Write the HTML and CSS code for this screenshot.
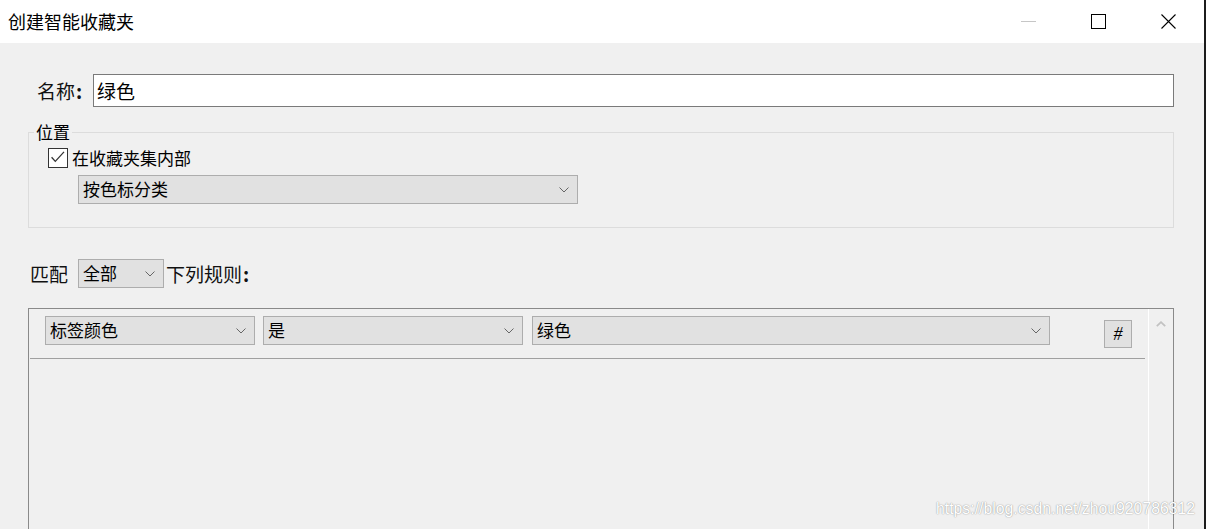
FILE: index.html
```html
<!DOCTYPE html>
<html lang="zh-CN">
<head>
<meta charset="utf-8">
<title>创建智能收藏夹</title>
<link rel="stylesheet" href="styles.css">
</head>
<body>
<div class="window">
  <header class="titlebar">
    <span class="title">创建智能收藏夹</span>
    <div class="controls">
      <span class="ctl"><span class="min-line"></span></span>
      <span class="ctl"><span class="max-box"></span></span>
      <span class="ctl">
        <svg class="close-x" width="15" height="15" viewBox="0 0 15 15"><path d="M0.5 0.5 L14.5 14.5 M14.5 0.5 L0.5 14.5" stroke="#000" stroke-width="1.1" fill="none"/></svg>
      </span>
    </div>
  </header>

  <main class="content">
    <div class="name-row">
      <span class="big-label name-label">名称<b>:</b></span>
      <div class="text-input">绿色</div>
    </div>

    <fieldset class="group">
      <legend>位置</legend>
      <div class="check-row">
        <span class="checkbox">
          <svg width="18" height="18" viewBox="0 0 18 18"><path d="M2.6 8.2 L6.3 12.4 L15 2.9" stroke="#333" stroke-width="1.3" fill="none"/></svg>
        </span>
        <span class="small-text">在收藏夹集内部</span>
      </div>
      <div class="select select-wide">
        <span class="select-text">按色标分类</span>
        <svg class="chev" width="10" height="6" viewBox="0 0 10 6"><path d="M0.5 0.5 L5 5 L9.5 0.5" stroke="#666" stroke-width="1" fill="none"/></svg>
      </div>
    </fieldset>

    <div class="match-row">
      <span class="big-label match-label">匹配</span>
      <div class="select select-small">
        <span class="select-text">全部</span>
        <svg class="chev" width="10" height="6" viewBox="0 0 10 6"><path d="M0.5 0.5 L5 5 L9.5 0.5" stroke="#666" stroke-width="1" fill="none"/></svg>
      </div>
      <span class="big-label rules-label">下列规则<b>:</b></span>
    </div>

    <div class="rules">
      <div class="rules-list">
        <div class="rule-row">
          <div class="select sel-field">
            <span class="select-text">标签颜色</span>
            <svg class="chev" width="10" height="6" viewBox="0 0 10 6"><path d="M0.5 0.5 L5 5 L9.5 0.5" stroke="#666" stroke-width="1" fill="none"/></svg>
          </div>
          <div class="select sel-op">
            <span class="select-text">是</span>
            <svg class="chev" width="10" height="6" viewBox="0 0 10 6"><path d="M0.5 0.5 L5 5 L9.5 0.5" stroke="#666" stroke-width="1" fill="none"/></svg>
          </div>
          <div class="select sel-value">
            <span class="select-text">绿色</span>
            <svg class="chev" width="10" height="6" viewBox="0 0 10 6"><path d="M0.5 0.5 L5 5 L9.5 0.5" stroke="#666" stroke-width="1" fill="none"/></svg>
          </div>
          <span class="hash-btn">#</span>
        </div>
      </div>
      <div class="scrollbar">
        <svg width="10" height="6" viewBox="0 0 10 6"><path d="M0.8 5.2 L5 1.2 L9.2 5.2" stroke="#c2c2c2" stroke-width="1.8" fill="none"/></svg>
      </div>
    </div>
  </main>

  <div class="watermark">https://blog.csdn.net/zhou920786312</div>
</div>
</body>
</html>
```

FILE: styles.css
```css
* { box-sizing: border-box; }

html, body {
  margin: 0;
  padding: 0;
  background: #1c1c1c;
  overflow: hidden;
}

body {
  width: 1206px;
  height: 529px;
  font-family: "Noto Sans CJK SC", "Noto Sans", sans-serif;
  color: #000;
}

.window {
  position: relative;
  width: 1204px;
  height: 529px;
  background: #f0f0f0;
  overflow: hidden;
  display: flex;
  flex-direction: column;
}

/* Title bar */
.titlebar {
  height: 43px;
  flex: 0 0 43px;
  background: #fff;
  display: flex;
  align-items: center;
  justify-content: space-between;
  padding-left: 8px;
}

.title {
  font-size: 18px;
  line-height: 24px;
  margin-top: -1px;
}

.controls {
  display: flex;
  height: 43px;
}

.ctl {
  width: 70px;
  height: 43px;
  display: flex;
  align-items: center;
  justify-content: center;
}

.min-line {
  display: block;
  width: 15px;
  height: 1px;
  background: #c6c6c6;
  margin-right: 1px;
}

.max-box {
  display: block;
  width: 15px;
  height: 15px;
  border: 1px solid #000;
  margin-left: -1px;
}

.close-x { display: block; margin-left: -1px; }

/* Content */
.content {
  flex: 1;
  padding: 0 30px 0 28px;
  display: flex;
  flex-direction: column;
}

.big-label {
  font-size: 19px;
  line-height: 24px;
  color: #111;
  white-space: nowrap;
}

.big-label b { font-weight: 700; margin-left: 1px; }

.small-text {
  font-size: 17px;
  line-height: 20px;
}

.name-row {
  margin-top: 31px;
  display: flex;
  align-items: center;
}

.name-label {
  width: 56px;
  margin-left: 9px;
  flex: 0 0 auto;
}

.text-input {
  flex: 1;
  height: 33px;
  background: #fff;
  border: 1px solid #7a7a7a;
  font-size: 19px;
  line-height: 31px;
  padding-left: 3px;
}

/* Location group */
.group {
  margin: 15px 0 0 0;
  padding: 0 0 23px 0;
  border: 1px solid #dcdcdc;
  min-width: 0;
}

.group legend {
  font-size: 17px;
  line-height: 20px;
  padding: 0 2px;
  margin-left: 5px;
}

.check-row {
  margin: 6px 0 0 19px;
  display: flex;
  align-items: center;
  gap: 4px;
  height: 20px;
}

.checkbox {
  width: 20px;
  height: 20px;
  border: 1px solid #333;
  background: #fff;
  display: flex;
  align-items: center;
  justify-content: center;
}

.checkbox svg { display: block; }

/* Dropdowns */
.select {
  height: 29px;
  background: #e1e1e1;
  border: 1px solid #adadad;
  display: flex;
  align-items: center;
  justify-content: space-between;
  padding: 0 8px 0 4px;
  flex: 0 0 auto;
}

.select-text {
  font-size: 17px;
  line-height: 22px;
  margin-top: -1px;
}

.chev { display: block; margin-top: 1px; }

.select-wide {
  width: 500px;
  margin: 7px 0 0 49px;
}

/* Match row */
.match-row {
  margin-top: 31px;
  display: flex;
  align-items: center;
}

.match-label {
  width: 50px;
  padding-left: 2px;
}

.select-small { width: 86px; }

.rules-label { margin-left: 2px; }

/* Rules box */
.rules {
  margin-top: 20px;
  height: 240px;
  flex: 0 0 auto;
  border: 1px solid #8a8a8a;
  display: flex;
}

.rules-list {
  flex: 1;
  display: flex;
  flex-direction: column;
}

.rule-row {
  margin: 0 3px 0 1px;
  height: 50px;
  padding: 7px 0 0 15px;
  border-bottom: 1px solid #a0a0a0;
  display: flex;
  align-items: flex-start;
}

.sel-field { width: 210px; }
.sel-op { width: 260px; margin-left: 8px; }
.sel-value { width: 518px; margin-left: 9px; }

.hash-btn {
  width: 28px;
  height: 28px;
  margin: 4px 0 0 54px;
  background: #e1e1e1;
  border: 1px solid #adadad;
  display: flex;
  align-items: center;
  justify-content: center;
  font-family: "Liberation Serif", serif;
  font-style: italic;
  font-size: 18px;
  line-height: 1;
}

.scrollbar {
  width: 25px;
  flex: 0 0 25px;
  border-left: 1px solid #fff;
  display: flex;
  justify-content: center;
  padding-top: 12px;
}

.scrollbar svg { display: block; }

/* Watermark overlay */
.watermark {
  position: absolute;
  left: 936px;
  top: 500px;
  font-family: "Liberation Sans", Arial, sans-serif;
  font-size: 15.8px;
  line-height: 18px;
  color: #fff;
  text-shadow: 0 0 1px rgba(0,0,0,0.35), 0 0 2px rgba(0,0,0,0.2);
  white-space: nowrap;
}
```
